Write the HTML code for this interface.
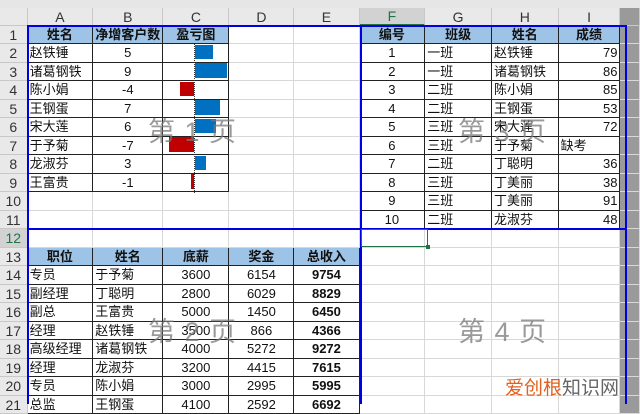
<!DOCTYPE html>
<html><head><meta charset="utf-8"><style>
body{margin:0;width:640px;height:404px;overflow:hidden;background:#fff;position:relative;font-family:"Liberation Sans","Noto Sans CJK SC",sans-serif;font-size:13px;color:#111}
table{position:absolute;left:0;top:8px;border-collapse:separate;border-spacing:0;table-layout:fixed}
td{border-right:1px solid #d8d8d8;border-bottom:1px solid #d8d8d8;padding:0 2px;white-space:nowrap;overflow:hidden;line-height:16px;box-sizing:border-box}
tr.ch td{background:#e9e9e9;text-align:center;color:#333;font-size:14px;border-color:#c8c8c8;height:17px}
td.rh{background:#e9e9e9;text-align:center;color:#333;font-size:14px;border-color:#c8c8c8;padding:0}
.h{background:#9dc3e6;font-weight:bold;text-align:center;border-color:#222}
.b{border-color:#222}
.c{text-align:center}.r{text-align:right}.bo{font-weight:bold;text-align:center}
.abs{position:absolute}
.wm{position:absolute;font-size:27px;color:rgba(120,120,120,.75);letter-spacing:1px}
</style></head><body>
<div class="abs" style="left:0;top:0;width:640px;height:8px;background:#e6e6e6"></div>
<table>
<colgroup><col style="width:28px"><col style="width:66px"><col style="width:67px"><col style="width:67px"><col style="width:66px"><col style="width:66px"><col style="width:67px"><col style="width:68px"><col style="width:67px"><col style="width:63px"><col style="width:20px"></colgroup>
<tr class="ch"><td></td><td>A</td><td>B</td><td>C</td><td>D</td><td>E</td><td style="background:#d2d2d2;color:#217346;border-bottom:2px solid #217346">F</td><td>G</td><td>H</td><td>I</td><td style="background:#9a9a9a"></td></tr>
<tr style="height:18px"><td class="rh">1</td><td class="h">姓名</td><td class="h">净增客户数</td><td class="h">盈亏图</td><td></td><td></td><td class="h">编号</td><td class="h">班级</td><td class="h">姓名</td><td class="h">成绩</td><td style="background:#9a9a9a"></td></tr>
<tr style="height:19px"><td class="rh">2</td><td class="b">赵铁锤</td><td class="b c">5</td><td class="b"></td><td></td><td></td><td class="b c">1</td><td class="b">一班</td><td class="b">赵铁锤</td><td class="b r">79</td><td style="background:#9a9a9a"></td></tr>
<tr style="height:18px"><td class="rh">3</td><td class="b">诸葛钢铁</td><td class="b c">9</td><td class="b"></td><td></td><td></td><td class="b c">2</td><td class="b">一班</td><td class="b">诸葛钢铁</td><td class="b r">86</td><td style="background:#9a9a9a"></td></tr>
<tr style="height:19px"><td class="rh">4</td><td class="b">陈小娟</td><td class="b c">-4</td><td class="b"></td><td></td><td></td><td class="b c">3</td><td class="b">二班</td><td class="b">陈小娟</td><td class="b r">85</td><td style="background:#9a9a9a"></td></tr>
<tr style="height:18px"><td class="rh">5</td><td class="b">王钢蛋</td><td class="b c">7</td><td class="b"></td><td></td><td></td><td class="b c">4</td><td class="b">二班</td><td class="b">王钢蛋</td><td class="b r">53</td><td style="background:#9a9a9a"></td></tr>
<tr style="height:19px"><td class="rh">6</td><td class="b">宋大莲</td><td class="b c">6</td><td class="b"></td><td></td><td></td><td class="b c">5</td><td class="b">三班</td><td class="b">宋大莲</td><td class="b r">72</td><td style="background:#9a9a9a"></td></tr>
<tr style="height:18px"><td class="rh">7</td><td class="b">于予菊</td><td class="b c">-7</td><td class="b"></td><td></td><td></td><td class="b c">6</td><td class="b">三班</td><td class="b">于予菊</td><td class="b">缺考</td><td style="background:#9a9a9a"></td></tr>
<tr style="height:19px"><td class="rh">8</td><td class="b">龙淑芬</td><td class="b c">3</td><td class="b"></td><td></td><td></td><td class="b c">7</td><td class="b">二班</td><td class="b">丁聪明</td><td class="b r">36</td><td style="background:#9a9a9a"></td></tr>
<tr style="height:18px"><td class="rh">9</td><td class="b">王富贵</td><td class="b c">-1</td><td class="b"></td><td></td><td></td><td class="b c">8</td><td class="b">三班</td><td class="b">丁美丽</td><td class="b r">38</td><td style="background:#9a9a9a"></td></tr>
<tr style="height:19px"><td class="rh">10</td><td></td><td></td><td></td><td></td><td></td><td class="b c">9</td><td class="b">三班</td><td class="b">丁美丽</td><td class="b r">91</td><td style="background:#9a9a9a"></td></tr>
<tr style="height:18px"><td class="rh">11</td><td></td><td></td><td></td><td></td><td></td><td class="b c">10</td><td class="b">二班</td><td class="b">龙淑芬</td><td class="b r">48</td><td style="background:#9a9a9a"></td></tr>
<tr style="height:19px"><td class="rh" style="background:#d2d2d2;color:#217346">12</td><td></td><td></td><td></td><td></td><td></td><td></td><td></td><td></td><td></td><td style="background:#9a9a9a"></td></tr>
<tr style="height:18px"><td class="rh">13</td><td class="h">职位</td><td class="h">姓名</td><td class="h">底薪</td><td class="h">奖金</td><td class="h">总收入</td><td></td><td></td><td></td><td></td><td style="background:#9a9a9a"></td></tr>
<tr style="height:19px"><td class="rh">14</td><td class="b">专员</td><td class="b">于予菊</td><td class="b c">3600</td><td class="b c">6154</td><td class="b bo">9754</td><td></td><td></td><td></td><td></td><td style="background:#9a9a9a"></td></tr>
<tr style="height:18px"><td class="rh">15</td><td class="b">副经理</td><td class="b">丁聪明</td><td class="b c">2800</td><td class="b c">6029</td><td class="b bo">8829</td><td></td><td></td><td></td><td></td><td style="background:#9a9a9a"></td></tr>
<tr style="height:19px"><td class="rh">16</td><td class="b">副总</td><td class="b">王富贵</td><td class="b c">5000</td><td class="b c">1450</td><td class="b bo">6450</td><td></td><td></td><td></td><td></td><td style="background:#9a9a9a"></td></tr>
<tr style="height:18px"><td class="rh">17</td><td class="b">经理</td><td class="b">赵铁锤</td><td class="b c">3500</td><td class="b c">866</td><td class="b bo">4366</td><td></td><td></td><td></td><td></td><td style="background:#9a9a9a"></td></tr>
<tr style="height:19px"><td class="rh">18</td><td class="b">高级经理</td><td class="b">诸葛钢铁</td><td class="b c">4000</td><td class="b c">5272</td><td class="b bo">9272</td><td></td><td></td><td></td><td></td><td style="background:#9a9a9a"></td></tr>
<tr style="height:18px"><td class="rh">19</td><td class="b">经理</td><td class="b">龙淑芬</td><td class="b c">3200</td><td class="b c">4415</td><td class="b bo">7615</td><td></td><td></td><td></td><td></td><td style="background:#9a9a9a"></td></tr>
<tr style="height:19px"><td class="rh">20</td><td class="b">专员</td><td class="b">陈小娟</td><td class="b c">3000</td><td class="b c">2995</td><td class="b bo">5995</td><td></td><td></td><td></td><td></td><td style="background:#9a9a9a"></td></tr>
<tr style="height:18px"><td class="rh">21</td><td class="b">总监</td><td class="b">王钢蛋</td><td class="b c">4100</td><td class="b c">2592</td><td class="b bo">6692</td><td></td><td></td><td></td><td></td><td style="background:#9a9a9a"></td></tr>
</table>
<!-- bars -->
<div class="abs" style="left:194px;top:44px;width:0;height:149px;border-left:1px dotted #333"></div>
<div class="abs" style="left:195px;top:45px;width:18px;height:14px;background:#0070c0"></div>
<div class="abs" style="left:195px;top:63px;width:32px;height:15px;background:#0070c0"></div>
<div class="abs" style="left:180px;top:82px;width:14px;height:14px;background:#c00000"></div>
<div class="abs" style="left:195px;top:100px;width:25px;height:15px;background:#0070c0"></div>
<div class="abs" style="left:195px;top:119px;width:21px;height:14px;background:#0070c0"></div>
<div class="abs" style="left:169px;top:137px;width:25px;height:15px;background:#c00000"></div>
<div class="abs" style="left:195px;top:156px;width:11px;height:14px;background:#0070c0"></div>
<div class="abs" style="left:191px;top:174px;width:3px;height:15px;background:#c00000"></div>
<!-- page break lines -->
<div class="abs" style="left:27px;top:25px;width:600px;height:2px;background:#0000e0"></div>
<div class="abs" style="left:27px;top:25px;width:2px;height:379px;background:#0000e0"></div>
<div class="abs" style="left:360px;top:25px;width:2px;height:379px;background:#0000e0"></div>
<div class="abs" style="left:625px;top:25px;width:2px;height:379px;background:#0000e0"></div>
<div class="abs" style="left:27px;top:228px;width:600px;height:2px;background:#0000e0"></div>
<!-- selection -->
<div class="abs" style="left:361px;top:229px;width:67px;height:18px;border:1px solid #217346;box-sizing:border-box"></div>
<div class="abs" style="left:426px;top:245px;width:4px;height:4px;background:#217346"></div>
<!-- watermarks -->
<div class="wm" style="left:148px;top:110px">第 1 页</div>
<div class="wm" style="left:458px;top:110px">第 3 页</div>
<div class="wm" style="left:148px;top:310px">第 2 页</div>
<div class="wm" style="left:458px;top:310px">第 4 页</div>
<div class="abs" style="left:505px;top:373px;font-size:19px;color:#666"><span style="color:#e2601e">爱创根</span>知识网</div>
</body></html>
